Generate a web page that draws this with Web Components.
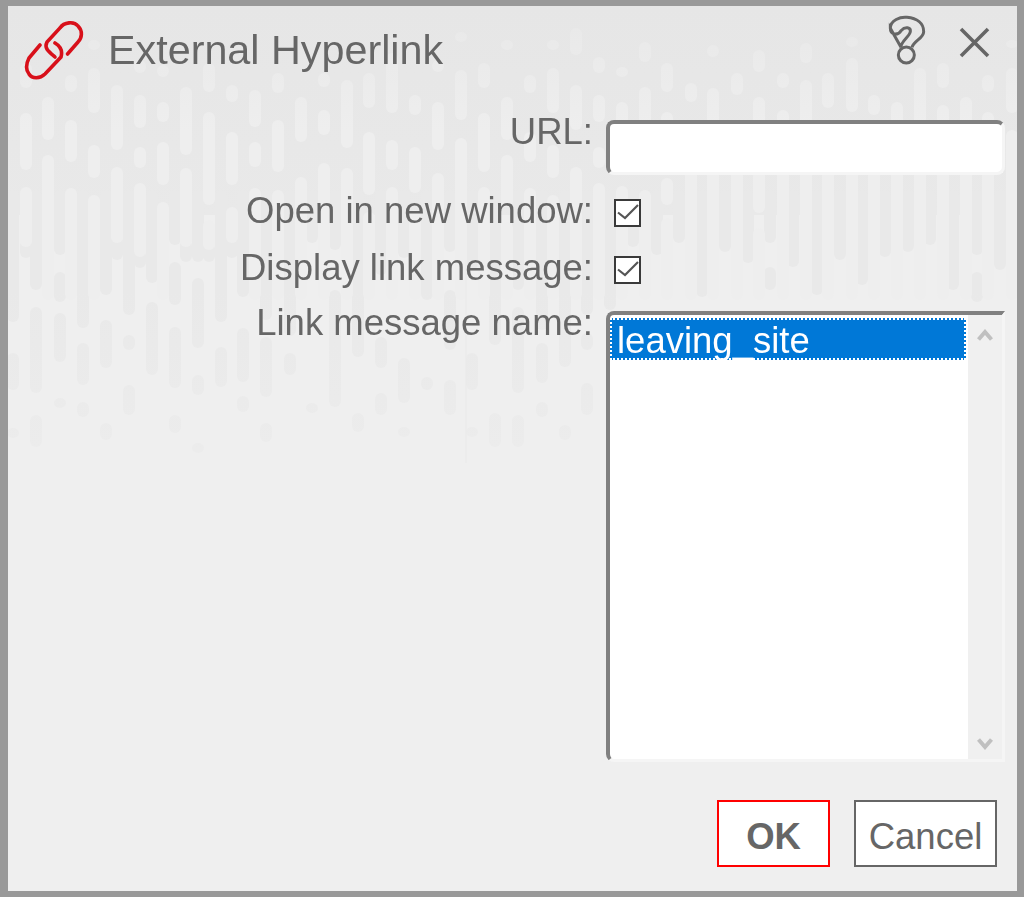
<!DOCTYPE html>
<html>
<head>
<meta charset="utf-8">
<title>External Hyperlink</title>
<style>
    html, body { margin: 0; height: 100%; }
    body { font-family: 'Liberation Sans', Arial, sans-serif; color: #666; }
</style>
</head>
<body>
<link-dialog heading="External Hyperlink">
    <dialog-field label="URL:" offset="8"><text-box></text-box></dialog-field>
    <dialog-field label="Open in new window:" style="margin-top:16px"><check-box></check-box></dialog-field>
    <dialog-field label="Display link message:" style="margin-top:17px"><check-box></check-box></dialog-field>
    <dialog-field label="Link message name:" offset="8" style="margin-top:15px">
        <list-box><list-option>leaving_site</list-option></list-box>
    </dialog-field>
    <dialog-button slot="footer" primary>OK</dialog-button>
    <dialog-button slot="footer">Cancel</dialog-button>
</link-dialog>

<script>
// light bars: [x, y1, y2, y1, y2, ...] in page coordinates
const LIGHT_BARS = [
    [26, 63, 88, 113, 170, 187, 247],
    [48, 97, 140, 155, 300],
    [71, 75, 92, 120, 162, 188, 300],
    [94, 40, 50, 68, 113, 145, 178, 195, 300],
    [117, 85, 150, 167, 243],
    [140, 60, 73, 95, 128, 147, 168, 183, 257],
    [163, 65, 77, 102, 122, 142, 185, 202, 300],
    [186, 87, 155, 168, 247],
    [209, 63, 92, 112, 205, 220, 250],
    [232, 85, 102, 132, 185, 207, 243],
    [255, 90, 127, 142, 167, 188, 300],
    [278, 73, 93, 120, 172, 190, 300],
    [301, 97, 142, 177, 300],
    [324, 73, 87, 110, 135, 163, 300],
    [347, 80, 148, 168, 300],
    [369, 73, 108, 132, 195, 212, 300],
    [392, 53, 113, 140, 170, 187, 300],
    [415, 95, 115, 147, 193, 210, 300],
    [438, 60, 72, 102, 150, 173, 300],
    [461, 32, 42, 70, 120, 138, 300],
    [484, 63, 88, 113, 172, 187, 300],
    [507, 40, 50, 97, 140, 155, 207, 222, 300],
    [530, 75, 93, 132, 162, 188, 300],
    [553, 40, 50, 68, 113, 145, 178, 195, 300],
    [576, 28, 55, 85, 130, 167, 300],
    [599, 57, 73, 95, 122, 147, 168, 183, 300],
    [622, 67, 77, 102, 160, 186, 300],
    [645, 42, 62, 87, 160, 190, 300],
    [667, 63, 92, 112, 160, 178, 205, 218, 300],
    [691, 83, 102, 125, 300],
    [713, 45, 57, 88, 300],
    [737, 73, 95, 125, 300],
    [759, 50, 72, 97, 160, 170, 213, 228, 300],
    [783, 73, 88, 110, 300],
    [806, 43, 63, 80, 300],
    [828, 73, 108, 130, 300],
    [852, 37, 47, 58, 112, 135, 300],
    [874, 95, 115, 135, 300],
    [897, 102, 300],
    [920, 68, 300],
    [943, 63, 88, 105, 300],
    [966, 97, 300],
    [988, 75, 92, 112, 300],
    [1012, 40, 48, 68, 113, 130, 300]
];

// dark bars below the solid band
const DARK_BARS = [
    [13, 190, 322, 353, 390, 428, 438],
    [36, 190, 290, 307, 393, 415, 447],
    [60, 190, 255, 272, 302, 313, 362, 398, 408],
    [83, 190, 328, 343, 385, 402, 417],
    [106, 190, 295, 320, 368, 423, 440],
    [129, 190, 315, 335, 350, 385, 415],
    [152, 190, 283, 302, 375],
    [175, 190, 245, 262, 305, 327, 388, 415, 433],
    [198, 190, 262, 278, 348, 375, 395, 443, 453],
    [221, 190, 322, 347, 387],
    [243, 190, 297, 328, 382, 396, 412],
    [266, 190, 320, 337, 397, 423, 442],
    [290, 190, 336, 353, 375],
    [312, 190, 243, 403, 413],
    [335, 190, 250, 290, 407],
    [358, 190, 357, 413, 432],
    [381, 190, 275, 337, 368, 393, 415],
    [404, 190, 258, 358, 403, 427, 437],
    [427, 190, 300, 377, 390],
    [450, 190, 252, 290, 350, 380, 415],
    [472, 190, 270, 353, 390, 427, 437],
    [495, 190, 345, 413, 447],
    [518, 190, 290, 307, 393, 415, 447],
    [542, 190, 330, 343, 383, 402, 417],
    [565, 190, 367, 425, 440],
    [587, 190, 315, 333, 350, 383, 415],
    [610, 190, 310],
    [633, 190, 247],
    [657, 190, 255],
    [679, 190, 243],
    [702, 190, 297],
    [725, 190, 252],
    [748, 190, 263],
    [770, 190, 243, 267, 290],
    [793, 190, 267],
    [817, 190, 295],
    [840, 190, 260],
    [862, 190, 285],
    [885, 190, 257],
    [908, 190, 252],
    [930, 190, 245],
    [953, 190, 290],
    [977, 190, 255, 272, 302],
    [1000, 190, 270],
    // short gaps where a light bar stops inside the band
    [117, 236, 260], [186, 240, 262], [232, 236, 258], [26, 240, 258], [140, 250, 268], [209, 243, 262]
];

function bars(list, width) {
    let out = '';
    for (const [x, ...ys] of list) {
        for (let i = 0; i < ys.length; i += 2) {
            out += `<rect x="${x - width / 2}" y="${ys[i]}" width="${width}" height="${ys[i + 1] - ys[i]}" rx="${width / 2}"/>`;
        }
    }
    return out;
}

class DialogPattern extends HTMLElement {
    constructor() {
        super();
        const shadow = this.attachShadow({mode: 'open'});
        shadow.innerHTML = `
            <style>
                :host { position: absolute; inset: 0; display: block; z-index: 0; background: #efefef; }
                svg { display: block; }
            </style>
            <svg width="1009" height="885" viewBox="8 6 1009 885">
                <defs>
                    <linearGradient id="band" gradientUnits="userSpaceOnUse" x1="0" y1="6" x2="0" y2="215">
                        <stop offset="0" stop-color="#e6e6e6"/>
                        <stop offset="1" stop-color="#e9e9e9"/>
                    </linearGradient>
                    <linearGradient id="light" gradientUnits="userSpaceOnUse" x1="0" y1="25" x2="0" y2="130">
                        <stop offset="0" stop-color="#e9e9e9"/>
                        <stop offset="1" stop-color="#eeeeee"/>
                    </linearGradient>
                    <linearGradient id="dark" gradientUnits="userSpaceOnUse" x1="0" y1="290" x2="0" y2="450">
                        <stop offset="0" stop-color="#e9e9e9"/>
                        <stop offset="1" stop-color="#ececec"/>
                    </linearGradient>
                </defs>
                <rect x="8" y="6" width="1009" height="209" fill="url(#band)"/>
                <g fill="url(#dark)">${bars(DARK_BARS, 12)}</g>
                <g fill="url(#light)">${bars(LIGHT_BARS, 12)}</g>
                <rect x="465.5" y="260" width="1" height="203" fill="#eaeaea"/>
            </svg>`;
    }
}
customElements.define('dialog-pattern', DialogPattern);

const dialogTemplate = document.createElement('template');
dialogTemplate.innerHTML = `
    <style>
        :host {
            display: block;
            box-sizing: border-box;
            position: relative;
            width: 1024px;
            height: 897px;
            border-style: solid;
            border-color: #999;
            border-width: 6px 7px 6px 8px;
            font-family: 'Liberation Sans', Arial, sans-serif;
            font-size: 36.5px;
            color: #666;
        }
        .content { position: relative; z-index: 1; filter: blur(0.4px); }
        header { display: flex; align-items: flex-start; height: 106px; padding: 14px 0 0 16px; box-sizing: border-box; }
        .logo { width: 60px; height: 60px; flex: none; }
        h1 { margin: 7px 0 0 24px; font-size: 41.3px; font-weight: normal; line-height: 46px; flex: 1; }
        .help { width: 40px; height: 54px; margin: -6px 0 0 0; flex: none; }
        .close { width: 34px; height: 34px; margin: 5px 26px 0 30px; flex: none; }
        footer { display: flex; justify-content: flex-end; gap: 24px; margin-top: 38px; padding-right: 20px; }
    </style>
    <dialog-pattern></dialog-pattern>
    <div class="content">
        <header>
            <svg class="logo" viewBox="0 0 60 60" fill="none" stroke="#d8101a" stroke-width="3.6" stroke-linecap="round">
                <path d="M31 37C24 31 20 28 23 22L36 8C40 2 50 1 54 6C59 11 58 18 54 22L43.5 34"/>
                <path d="M31 23C36 26 39 30 37 37L21 54C16 59 8 59 5 54C1 49 2 44 5 38L16 25"/>
            </svg>
            <h1></h1>
            <svg class="help" viewBox="20 12 120 162" fill="none" stroke="#666" stroke-width="9">
                <path d="M30 55C30 30 60 20 80 22C110 25 130 40 130 65C130 85 100 92 95 112M62 112C60 95 88 80 90 65C92 52 75 48 62 62C55 75 30 78 30 55Z"/>
                <circle cx="78" cy="135" r="24"/>
            </svg>
            <svg class="close" viewBox="0 0 34 34" fill="none" stroke="#666" stroke-width="3.6">
                <path d="M4 4L31 31M31 4L4 31"/>
            </svg>
        </header>
        <slot></slot>
        <footer><slot name="footer"></slot></footer>
    </div>
`;

class LinkDialog extends HTMLElement {
    constructor() {
        super();
        const shadow = this.attachShadow({mode: 'open'});
        shadow.appendChild(dialogTemplate.content.cloneNode(true));
        shadow.querySelector('h1').textContent = this.getAttribute('heading');
    }
}
customElements.define('link-dialog', LinkDialog);

const fieldTemplate = document.createElement('template');
fieldTemplate.innerHTML = `
    <style>
        :host { display: grid; grid-template-columns: 585px 399px; column-gap: 13px; }
        label { display: block; text-align: right; line-height: 40px; white-space: nowrap; }
        .control { display: block; }
    </style>
    <label></label>
    <div class="control"><slot></slot></div>
`;

class DialogField extends HTMLElement {
    constructor() {
        super();
        const shadow = this.attachShadow({mode: 'open'});
        shadow.appendChild(fieldTemplate.content.cloneNode(true));
        shadow.querySelector('label').textContent = this.getAttribute('label');
        shadow.querySelector('.control').style.paddingTop = (this.getAttribute('offset') || 0) + 'px';
    }
}
customElements.define('dialog-field', DialogField);

class TextBox extends HTMLElement {
    constructor() {
        super();
        this.attachShadow({mode: 'open'}).innerHTML = `
            <style>
                :host {
                    display: block;
                    box-sizing: border-box;
                    height: 55px;
                    background: #fff;
                    border-style: solid;
                    border-width: 4px 3px 3px 4px;
                    border-color: #808080 #f5f5f5 #f5f5f5 #808080;
                    border-radius: 8px;
                }
            </style>`;
    }
}
customElements.define('text-box', TextBox);

class CheckBox extends HTMLElement {
    constructor() {
        super();
        this.attachShadow({mode: 'open'}).innerHTML = `
            <style>
                :host { display: block; box-sizing: border-box; width: 27px; height: 28px; margin: 8px 0 0 8px; background: #fff; border: 2px solid #3a3a3a; }
                svg { display: block; }
            </style>
            <svg width="23" height="24" viewBox="0 0 23 24" fill="none" stroke="#555" stroke-width="2.2">
                <path d="M2 11.5L9 17L22 4"/>
            </svg>`;
    }
}
customElements.define('check-box', CheckBox);

class ListBox extends HTMLElement {
    constructor() {
        super();
        this.attachShadow({mode: 'open'}).innerHTML = `
            <style>
                :host {
                    display: flex;
                    box-sizing: border-box;
                    height: 451px;
                    background: #fff;
                    border-style: solid;
                    border-width: 4px 3px 3px 4px;
                    border-color: #808080 #f5f5f5 #f5f5f5 #808080;
                    border-radius: 8px 0 0 8px;
                }
                .items { flex: 1; padding-top: 3px; min-width: 0; }
                .scrollbar { width: 34px; margin-left: 2px; background: #f0f0f0; display: flex; flex-direction: column; justify-content: space-between; align-items: center; padding: 14px 0 9px; box-sizing: border-box; }
                svg { display: block; }
            </style>
            <div class="items"><slot></slot></div>
            <div class="scrollbar">
                <svg width="16" height="12" viewBox="0 0 16 12" fill="none" stroke="#c0c0c0" stroke-width="4"><path d="M1.5 10.5L8 3L14.5 10.5"/></svg>
                <svg width="16" height="12" viewBox="0 0 16 12" fill="none" stroke="#c0c0c0" stroke-width="4"><path d="M1.5 1.5L8 9L14.5 1.5"/></svg>
            </div>`;
    }
}
customElements.define('list-box', ListBox);

class ListOption extends HTMLElement {
    constructor() {
        super();
        this.attachShadow({mode: 'open'}).innerHTML = `
            <style>
                :host {
                    display: block;
                    box-sizing: border-box;
                    height: 42px;
                    line-height: 42px;
                    padding-left: 5px;
                    background: #0078d7;
                    color: #fff;
                    border: 2px dotted #fff;
                    white-space: nowrap;
                }
            </style>
            <slot></slot>`;
    }
}
customElements.define('list-option', ListOption);

class DialogButton extends HTMLElement {
    constructor() {
        super();
        this.attachShadow({mode: 'open'}).innerHTML = `
            <style>
                :host { display: block; }
                button {
                    display: block;
                    box-sizing: border-box;
                    width: 143px;
                    height: 67px;
                    padding: 6px 0 0;
                    margin: 0;
                    font: inherit;
                    color: inherit;
                    background: #fff;
                    border: 2px solid #666;
                    border-radius: 0;
                }
                :host([primary]) button { width: 113px; font-weight: bold; border-color: #f00; }
            </style>
            <button><slot></slot></button>`;
    }
}
customElements.define('dialog-button', DialogButton);
</script>
</body>
</html>
